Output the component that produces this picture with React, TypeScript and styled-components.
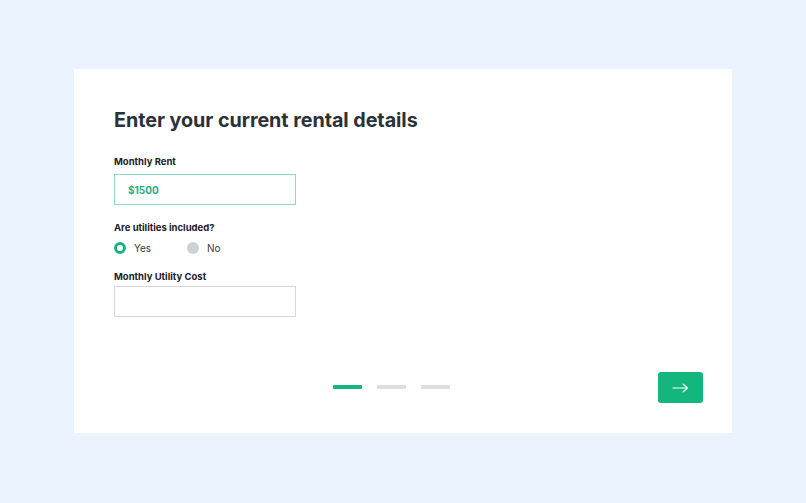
import React, { FC, useState } from 'react';
import styled, { createGlobalStyle } from 'styled-components';

const GlobalStyle = createGlobalStyle`
  html, body {
    margin: 0;
    padding: 0;
    background: #eaf3fe;
    font-family: Inter, "Noto Sans", sans-serif;
  }
`;

const Page = styled.div`
  width: 806px;
  height: 503px;
  padding: 69px 74px 70px;
  box-sizing: border-box;
`;

const Card = styled.div`
  width: 658px;
  height: 364px;
  background: #ffffff;
  padding: 39px 29px 31px 40px;
  box-sizing: border-box;
  display: flex;
  flex-direction: column;
`;

const Title = styled.h1`
  margin: 0 0 23px;
  font-size: 19.75px;
  line-height: 25px;
  font-weight: 700;
  color: #2b3138;
  letter-spacing: -0.05px;
`;

const Label = styled.div<{ tight?: boolean }>`
  font-size: 9.5px;
  line-height: 12px;
  font-weight: 700;
  color: #1c2128;
  margin-bottom: ${p => (p.tight ? '3px' : '6px')};
`;

const Field = styled.div`
  margin-bottom: 17px;
`;

const Input = styled.div<{ active?: boolean }>`
  width: 182px;
  height: 31px;
  box-sizing: border-box;
  border: 1px solid ${p => (p.active ? '#8edcbf' : '#d6d9dc')};
  display: flex;
  align-items: center;
  padding-left: 13px;
  font-size: 10px;
  font-weight: 700;
  color: #1fb27e;
`;

const RadioRow = styled.div`
  display: flex;
  align-items: center;
  padding-top: 2px;
`;

const RadioOption = styled.label`
  display: flex;
  align-items: center;
  width: 73px;
  font-size: 10px;
  color: #3a4047;
`;

const RadioDot = styled.span<{ checked?: boolean }>`
  width: 12px;
  height: 12px;
  box-sizing: border-box;
  border-radius: 50%;
  margin-right: 8px;
  background: ${p => (p.checked ? '#ffffff' : '#cfd1d3')};
  border: ${p => (p.checked ? '3px solid #13b77d' : 'none')};
`;

const Footer = styled.div`
  margin-top: auto;
  display: flex;
  align-items: center;
  justify-content: space-between;
  padding-left: 219px;
`;

const Steps = styled.div`
  display: flex;
  gap: 15px;
`;

const Step = styled.span<{ active?: boolean }>`
  width: 29px;
  height: 4px;
  border-radius: 1px;
  background: ${p => (p.active ? '#13b77d' : '#dcdee0')};
`;

const NextButton = styled.button`
  width: 45px;
  height: 31px;
  margin-bottom: -1px;
  border: none;
  border-radius: 3px;
  background: #13b77d;
  display: flex;
  align-items: center;
  justify-content: center;
  cursor: pointer;
  padding: 0;
`;

const App: FC = () => {
  const [included, setIncluded] = useState(true);
  return (
    <>
      <GlobalStyle />
      <Page>
        <Card>
          <Title>Enter your current rental details</Title>
          <Field>
            <Label>Monthly Rent</Label>
            <Input active>$1500</Input>
          </Field>
          <Field>
            <Label>Are utilities included?</Label>
            <RadioRow>
              <RadioOption onClick={() => setIncluded(true)}>
                <RadioDot checked={included} />
                Yes
              </RadioOption>
              <RadioOption onClick={() => setIncluded(false)}>
                <RadioDot checked={!included} />
                No
              </RadioOption>
            </RadioRow>
          </Field>
          <Field>
            <Label tight>Monthly Utility Cost</Label>
            <Input />
          </Field>
          <Footer>
            <Steps>
              <Step active />
              <Step />
              <Step />
            </Steps>
            <NextButton aria-label="Next">
              <svg width="17" height="10" viewBox="0 0 17 10" fill="none">
                <path d="M1 5h14.5M11 1l4.5 4L11 9" stroke="#fff" strokeWidth="1.1" strokeLinecap="round" strokeLinejoin="round" />
              </svg>
            </NextButton>
          </Footer>
        </Card>
      </Page>
    </>
  );
};

export default App;
